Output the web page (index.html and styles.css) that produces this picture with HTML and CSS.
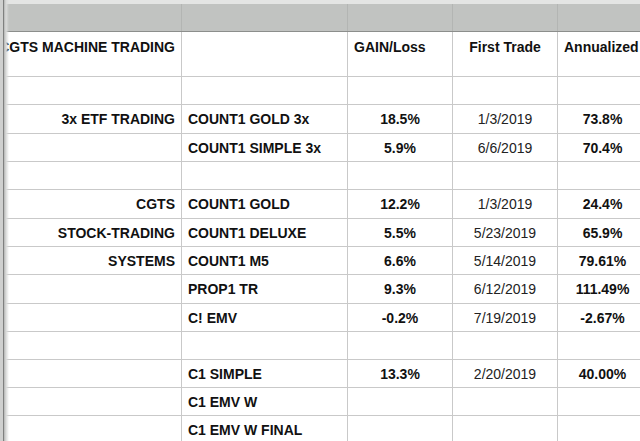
FILE: index.html
```html
<!DOCTYPE html>
<html>
<head>
<meta charset="utf-8">
<link rel="stylesheet" href="styles.css">
</head>
<body>
<div class="sheet">
  <div class="topgap"></div>
  <div class="row head">
    <div class="cell"></div><div class="cell"></div><div class="cell"></div><div class="cell"></div><div class="cell"></div>
  </div>
  <div class="row title">
    <div class="cell a">CGTS MACHINE TRADING</div>
    <div class="cell b"></div>
    <div class="cell c left">GAIN/Loss</div>
    <div class="cell d">First Trade</div>
    <div class="cell e left">Annualized</div>
  </div>
  <div class="row h28"><div class="cell a"></div><div class="cell b"></div><div class="cell c"></div><div class="cell d"></div><div class="cell e"></div></div>
  <div class="row h29"><div class="cell a">3x ETF TRADING</div><div class="cell b">COUNT1 GOLD 3x</div><div class="cell c">18.5%</div><div class="cell d">1/3/2019</div><div class="cell e">73.8%</div></div>
  <div class="row h28"><div class="cell a"></div><div class="cell b">COUNT1 SIMPLE 3x</div><div class="cell c">5.9%</div><div class="cell d">6/6/2019</div><div class="cell e">70.4%</div></div>
  <div class="row h28"><div class="cell a"></div><div class="cell b"></div><div class="cell c"></div><div class="cell d"></div><div class="cell e"></div></div>
  <div class="row h29"><div class="cell a">CGTS</div><div class="cell b">COUNT1 GOLD</div><div class="cell c">12.2%</div><div class="cell d">1/3/2019</div><div class="cell e">24.4%</div></div>
  <div class="row h28"><div class="cell a">STOCK-TRADING</div><div class="cell b">COUNT1 DELUXE</div><div class="cell c">5.5%</div><div class="cell d">5/23/2019</div><div class="cell e">65.9%</div></div>
  <div class="row h28"><div class="cell a">SYSTEMS</div><div class="cell b">COUNT1 M5</div><div class="cell c">6.6%</div><div class="cell d">5/14/2019</div><div class="cell e">79.61%</div></div>
  <div class="row h29"><div class="cell a"></div><div class="cell b">PROP1 TR</div><div class="cell c">9.3%</div><div class="cell d">6/12/2019</div><div class="cell e">111.49%</div></div>
  <div class="row h28"><div class="cell a"></div><div class="cell b">C! EMV</div><div class="cell c">-0.2%</div><div class="cell d">7/19/2019</div><div class="cell e">-2.67%</div></div>
  <div class="row h28"><div class="cell a"></div><div class="cell b"></div><div class="cell c"></div><div class="cell d"></div><div class="cell e"></div></div>
  <div class="row h28"><div class="cell a"></div><div class="cell b">C1 SIMPLE</div><div class="cell c">13.3%</div><div class="cell d">2/20/2019</div><div class="cell e">40.00%</div></div>
  <div class="row h28"><div class="cell a"></div><div class="cell b">C1 EMV W</div><div class="cell c"></div><div class="cell d"></div><div class="cell e"></div></div>
  <div class="row h28"><div class="cell a"></div><div class="cell b">C1 EMV W FINAL</div><div class="cell c"></div><div class="cell d"></div><div class="cell e"></div></div>
  <div class="row h28"><div class="cell a"></div><div class="cell b"></div><div class="cell c"></div><div class="cell d"></div><div class="cell e"></div></div>
  <div class="freeze"></div>
</div>
</body>
</html>
```
FILE: styles.css
```css
html, body {
  margin: 0;
  padding: 0;
  background: #ffffff;
  overflow: hidden;
}
.sheet {
  position: relative;
  width: 640px;
  height: 441px;
  overflow: hidden;
  padding-left: 4px;
  box-sizing: border-box;
  background: #ffffff;
  font-family: "Liberation Sans", Arial, Helvetica, sans-serif;
  font-size: 14px;
  font-weight: bold;
  color: #111111;
}
.topgap {
  height: 4px;
  margin-left: -4px;
  background: #e4e5e4;
}
.row {
  display: grid;
  grid-template-columns: 178px 166px 105px 105px 90px;
  border-bottom: 1px solid #c9c9c9;
  box-sizing: border-box;
}
.cell {
  border-right: 1px solid #c9c9c9;
  box-sizing: border-box;
  display: flex;
  align-items: center;
  justify-content: center;
  white-space: nowrap;
  overflow: hidden;
}
.head {
  height: 28px;
  background: #c1c3c1;
  border-bottom: 1px solid #8c8e8c;
}
.head .cell {
  border-right-color: #b3b5b3;
}
.title {
  height: 45px;
}
.title .cell {
  align-items: flex-start;
  padding-top: 7px;
}
.h28 { height: 28px; }
.h29 { height: 29px; }
.a {
  justify-content: flex-end;
  padding-right: 6px;
}
.b {
  justify-content: flex-start;
  padding-left: 6px;
}
.left {
  justify-content: flex-start;
  padding-left: 6px;
}
.d {
  font-weight: normal;
  color: #222222;
}
.title .d {
  font-weight: bold;
  color: #111111;
}
.freeze {
  position: absolute;
  left: 0;
  top: 0;
  width: 9px;
  height: 441px;
  background: linear-gradient(to right, #cfd0cf 0px, #cfd0cf 3px, #7f807f 3px, #7f807f 4px, #b5b6b5 4px, #dadbda 6px, rgba(255,255,255,0) 9px);
}
```
